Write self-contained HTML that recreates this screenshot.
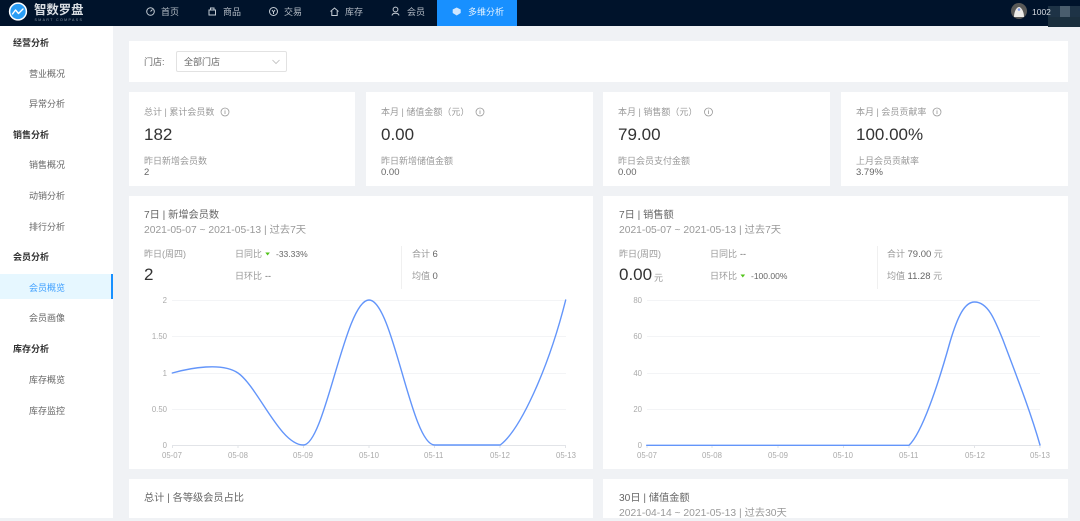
<!DOCTYPE html>
<html lang="zh"><head><meta charset="utf-8"><title>智数罗盘</title>
<style>
*{box-sizing:border-box}
html,body{margin:0;padding:0}
body{width:1080px;height:518px;overflow:hidden;position:relative;background:#f0f2f5;font-family:"Liberation Sans","Noto Sans CJK SC",sans-serif;color:#666}
#w{position:absolute;left:0;top:0;width:1080px;height:518px;filter:blur(.3px)}
.t{position:absolute;white-space:nowrap;line-height:14px;font-size:9px;height:14px}
.b{position:absolute;background:#fff}
.h{color:#333;font-weight:700}
.m{color:#666}
.g{color:#999}
.v{color:#333;font-size:17px;line-height:22px;height:22px}
.n{color:#b4bcc5;font-size:9px}
.tt{color:#666;font-size:10.2px}
.dt{color:#999;font-size:10.3px}
.s{font-size:9.5px}
.a{color:#aaa;font-size:7.8px}
.r{width:20px;text-align:right}
svg{position:absolute;left:0;top:0}
</style></head><body><div id="w">
<div class="b" style="left:0;top:0;width:1080px;height:26px;background:#00132b"></div>
<div class="b" style="left:0;top:26px;width:113px;height:492px"></div>
<div class="b" style="left:437px;top:0;width:80px;height:26px;background:#1890ff"></div>
<div class="b" style="left:0;top:274px;width:113px;height:25px;background:#e6f7ff"></div>
<div class="b" style="left:111px;top:274px;width:2px;height:25px;background:#1890ff"></div>

<div class="b" style="left:129px;top:41px;width:939px;height:41px"></div>
<div class="b" style="left:129px;top:92px;width:226px;height:94px"></div>
<div class="b" style="left:366px;top:92px;width:227px;height:94px"></div>
<div class="b" style="left:603px;top:92px;width:227px;height:94px"></div>
<div class="b" style="left:841px;top:92px;width:227px;height:94px"></div>
<div class="b" style="left:129px;top:196px;width:464px;height:273px"></div>
<div class="b" style="left:603px;top:196px;width:465px;height:273px"></div>
<div class="b" style="left:129px;top:479px;width:464px;height:39px"></div>
<div class="b" style="left:603px;top:479px;width:465px;height:39px"></div>

<div class="b" style="left:176px;top:51px;width:111px;height:21px;border:1px solid #e2e2e2;border-radius:2px"></div>
<div class="b" style="left:401px;top:246px;width:1px;height:43px;background:#f0f0f0"></div>
<div class="b" style="left:877px;top:246px;width:1px;height:43px;background:#f0f0f0"></div>

<div class="b" style="left:1048px;top:6px;width:32px;height:11px;background:#1e3346"></div>
<div class="b" style="left:1060px;top:6px;width:10px;height:11px;background:#4a5d6d"></div>
<div class="b" style="left:1048px;top:17px;width:32px;height:10px;background:#1b2f3e"></div>

<svg width="1080" height="518" viewBox="0 0 1080 518" fill="none">
 <circle cx="18" cy="11.5" r="8.4" fill="#2a9df4" stroke="#fff" stroke-width="1.5"/>
 <path d="M12.5 14 L15.5 10 L18.5 13.5 L23 9" stroke="#fff" stroke-width="1.4" stroke-linecap="round" stroke-linejoin="round"/>
 <g stroke="#c4ccd4" stroke-width="1">
  <circle cx="150.5" cy="11.5" r="3.8"/><path d="M150.5 11.5 L152.5 9.5"/>
  <path d="M209 10h6.5v5H209z M210.5 10V8h3.5v2" transform="translate(0,0)"/>
  <circle cx="273.5" cy="11.5" r="4"/><path d="M272 10 L273.5 12 L275 10 M273.5 12V14"/>
  <path d="M330.5 11.5 L334.5 8 L338.5 11.5 M331.8 11V15.5h5.4V11"/>
  <circle cx="395.5" cy="9.5" r="2.4"/><path d="M392 15.5 C392.5 12.5 398.5 12.5 399 15.5"/>
 </g>
 <path d="M456.7 7.5 L460.7 9.5 L460.7 13 L456.7 15.5 L452.7 13 L452.7 9.5Z" fill="#cfe6ff"/>
 <circle cx="1019" cy="11" r="8" fill="#5a5a58"/>
 <path d="M1014 17 C1014 11 1017 7 1019 7 C1021 7 1024 11 1024 17Z" fill="#ecebe8"/>
 <circle cx="1019" cy="9.5" r="1.3" fill="#7f9be8"/>
 <path d="M272.5 60 L276 63.5 L279.5 60" stroke="#bbb" stroke-width=".8"/>
 <g stroke="#999" stroke-width=".8">
  <circle cx="225" cy="112" r="4"/><path d="M225 111v3M225 109.8v.8"/>
  <circle cx="480" cy="112" r="4"/><path d="M480 111v3M480 109.8v.8"/>
  <circle cx="708.5" cy="112" r="4"/><path d="M708.5 111v3M708.5 109.8v.8"/>
  <circle cx="937" cy="112" r="4"/><path d="M937 111v3M937 109.8v.8"/>
 </g>
 <path d="M265.3 252.5h4.6l-2.3 3z" fill="#52c41a"/>
 <path d="M740.5 274.5h4.6l-2.3 3z" fill="#52c41a"/>
 <g stroke="#f3f4f6" stroke-width="1">
  <path d="M172 300.5H566M172 336.5H566M172 373.5H566M172 409.5H566"/>
  <path d="M647 300.5H1040M647 336.5H1040M647 373.5H1040M647 409.5H1040"/>
 </g>
 <g stroke="#e2e4e8" stroke-width="1">
  <path d="M172 445.5H566M647 445.5H1040"/>
  <path d="M172.5 445v3M238 445v3M303.5 445v3M369 445v3M434.5 445v3M500 445v3M565.5 445v3"/>
  <path d="M647 445v3M712 445v3M778 445v3M843.5 445v3M909 445v3M974.5 445v3M1040 445v3"/>
 </g>
 <g stroke="#6395fa" stroke-width="1.4" stroke-linecap="round">
  <path d="M172.3 373 C190 368 222 362 238 373 C258 387 280 445 303.4 445 C325 445 345 300 369 300 C393 300 411 445 434.6 445 L500.2 445 C520 430 548 370 565.7 300"/>
  <path d="M646.7 445.3 L909 445.3 C922 433 938 385 950 342 C958 315 965 302 974.5 302 C988 302 995 320 1003 340 C1015 372 1030 410 1040 445"/>
 </g>
</svg>

<span class="t" style="left:34px;top:3px;font-size:12.4px;line-height:15px;height:15px;color:#d8dde2;font-weight:700">智数罗盘</span>
<span class="t" style="left:34.5px;top:17px;font-size:3.6px;line-height:6px;height:6px;color:#8a97a3;letter-spacing:1.35px">SMART COMPASS</span>
<span class="t n" style="left:161px;top:5px">首页</span>
<span class="t n" style="left:223px;top:5px">商品</span>
<span class="t n" style="left:284px;top:5px">交易</span>
<span class="t n" style="left:345px;top:5px">库存</span>
<span class="t n" style="left:407px;top:5px">会员</span>
<span class="t" style="left:468px;top:5px;color:#e6f3ff;font-size:9px">多维分析</span>
<span class="t" style="left:1032px;top:5px;color:#d5dae0;font-size:8.5px">1002</span>

<span class="t h" style="left:13px;top:35.5px">经营分析</span>
<span class="t m" style="left:29px;top:67px">营业概况</span>
<span class="t m" style="left:29px;top:97px">异常分析</span>
<span class="t h" style="left:13px;top:127.5px">销售分析</span>
<span class="t m" style="left:29px;top:158px">销售概况</span>
<span class="t m" style="left:29px;top:189px">动销分析</span>
<span class="t m" style="left:29px;top:220px">排行分析</span>
<span class="t h" style="left:13px;top:250px">会员分析</span>
<span class="t" style="left:29px;top:281px;color:#40a0ff">会员概览</span>
<span class="t m" style="left:29px;top:311px">会员画像</span>
<span class="t h" style="left:13px;top:342px">库存分析</span>
<span class="t m" style="left:29px;top:373px">库存概览</span>
<span class="t m" style="left:29px;top:404px">库存监控</span>

<span class="t m" style="left:144px;top:55px">门店:</span>
<span class="t m" style="left:184px;top:55px">全部门店</span>

<span class="t g" style="left:144px;top:105px">总计 | 累计会员数</span>
<span class="t v" style="left:144px;top:124px">182</span>
<span class="t g" style="left:144px;top:153.5px">昨日新增会员数</span>
<span class="t m s" style="left:144px;top:166px">2</span>

<span class="t g" style="left:381px;top:105px">本月 | 储值金额（元）</span>
<span class="t v" style="left:381px;top:124px">0.00</span>
<span class="t g" style="left:381px;top:153.5px">昨日新增储值金额</span>
<span class="t m s" style="left:381px;top:166px">0.00</span>

<span class="t g" style="left:618px;top:105px">本月 | 销售额（元）</span>
<span class="t v" style="left:618px;top:124px">79.00</span>
<span class="t g" style="left:618px;top:153.5px">昨日会员支付金额</span>
<span class="t m s" style="left:618px;top:166px">0.00</span>

<span class="t g" style="left:856px;top:105px">本月 | 会员贡献率</span>
<span class="t v" style="left:856px;top:124px">100.00%</span>
<span class="t g" style="left:856px;top:153.5px">上月会员贡献率</span>
<span class="t m s" style="left:856px;top:166px">3.79%</span>

<span class="t tt" style="left:144px;top:208.5px">7日 | 新增会员数</span>
<span class="t dt" style="left:144px;top:223.5px">2021-05-07 ~ 2021-05-13 | 过去7天</span>
<span class="t g" style="left:144px;top:247px">昨日(周四)</span>
<span class="t v" style="left:144px;top:264px">2</span>
<span class="t g" style="left:235px;top:247px">日同比</span>
<span class="t m" style="left:276px;top:247px;font-size:8.5px">-33.33%</span>
<span class="t g" style="left:235px;top:269px">日环比</span>
<span class="t m" style="left:265px;top:269px">--</span>
<span class="t g" style="left:412px;top:247px">合计 <span class="s" style="color:#666">6</span></span>
<span class="t g" style="left:412px;top:268.5px">均值 <span class="s" style="color:#666">0</span></span>

<span class="t tt" style="left:619px;top:208.5px">7日 | 销售额</span>
<span class="t dt" style="left:619px;top:223.5px">2021-05-07 ~ 2021-05-13 | 过去7天</span>
<span class="t g" style="left:619px;top:247px">昨日(周四)</span>
<span class="t v" style="left:619px;top:264px">0.00</span>
<span class="t g" style="left:654px;top:270.5px">元</span>
<span class="t g" style="left:710px;top:247px">日同比</span>
<span class="t m" style="left:740px;top:247px">--</span>
<span class="t g" style="left:710px;top:269px">日环比</span>
<span class="t m" style="left:751px;top:269px;font-size:8.5px">-100.00%</span>
<span class="t g" style="left:887px;top:247px">合计 <span class="s" style="color:#666">79.00</span> 元</span>
<span class="t g" style="left:887px;top:268.5px">均值 <span class="s" style="color:#666">11.28</span> 元</span>

<span class="t a r" style="left:147px;top:294px">2</span>
<span class="t a r" style="left:147px;top:330px">1.50</span>
<span class="t a r" style="left:147px;top:367px">1</span>
<span class="t a r" style="left:147px;top:403px">0.50</span>
<span class="t a r" style="left:147px;top:439px">0</span>
<span class="t a r" style="left:622px;top:294px">80</span>
<span class="t a r" style="left:622px;top:330px">60</span>
<span class="t a r" style="left:622px;top:367px">40</span>
<span class="t a r" style="left:622px;top:403px">20</span>
<span class="t a r" style="left:622px;top:439px">0</span>

<span class="t a" style="left:162px;top:449px">05-07</span>
<span class="t a" style="left:228px;top:449px">05-08</span>
<span class="t a" style="left:293px;top:449px">05-09</span>
<span class="t a" style="left:359px;top:449px">05-10</span>
<span class="t a" style="left:424px;top:449px">05-11</span>
<span class="t a" style="left:490px;top:449px">05-12</span>
<span class="t a" style="left:556px;top:449px">05-13</span>
<span class="t a" style="left:637px;top:449px">05-07</span>
<span class="t a" style="left:702px;top:449px">05-08</span>
<span class="t a" style="left:768px;top:449px">05-09</span>
<span class="t a" style="left:833px;top:449px">05-10</span>
<span class="t a" style="left:899px;top:449px">05-11</span>
<span class="t a" style="left:965px;top:449px">05-12</span>
<span class="t a" style="left:1030px;top:449px">05-13</span>

<span class="t tt" style="left:144px;top:491.5px">总计 | 各等级会员占比</span>
<span class="t tt" style="left:619px;top:491.5px">30日 | 储值金额</span>
<span class="t dt" style="left:619px;top:506.5px">2021-04-14 ~ 2021-05-13 | 过去30天</span>
</div></body></html>
